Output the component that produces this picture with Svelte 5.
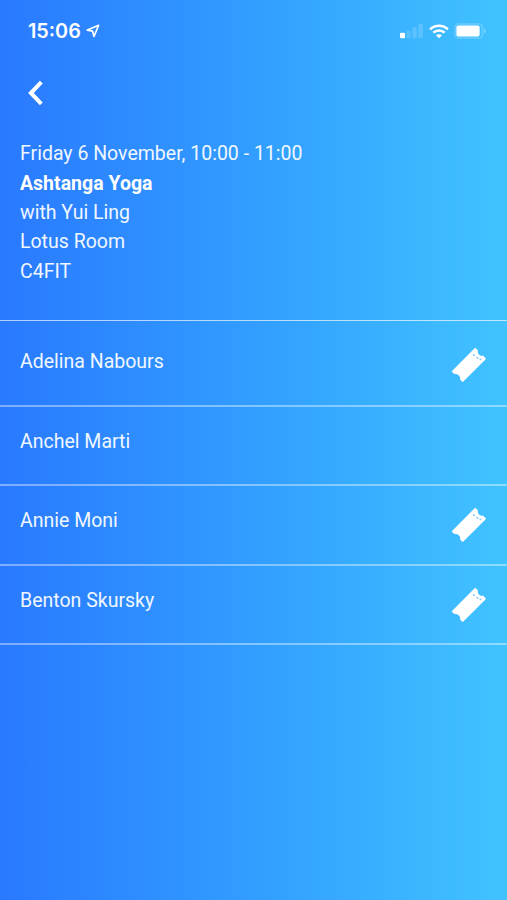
<script>
  const session = {
    when: 'Friday 6 November, 10:00 - 11:00',
    title: 'Ashtanga Yoga',
    teacher: 'with Yui Ling',
    room: 'Lotus Room',
    venue: 'C4FIT',
  }

  const attendees = [
    { name: 'Adelina Nabours', ticket: true },
    { name: 'Anchel Marti', ticket: false },
    { name: 'Annie Moni', ticket: true },
    { name: 'Benton Skursky', ticket: true },
  ]
</script>

<main class="screen">
  <div class="status-bar">
    <div class="clock">
      <span>15:06</span>
      <svg class="location" width="14" height="14" viewBox="0 0 14 14">
        <path d="M12.6 1.3 1.3 6.1 6.6 7.2 8 12.5Z" fill="none" stroke="#fff" stroke-width="1.7" stroke-linejoin="round" />
      </svg>
    </div>
    <div class="indicators">
      <svg width="23" height="16" viewBox="0 0 23 16" fill="#fff">
        <rect x="0" y="9.7" width="5" height="5.6" rx="1.3" />
        <rect x="6.2" y="7.2" width="4.4" height="8" rx="1.2" opacity="0.15" />
        <rect x="12.4" y="4" width="4.4" height="11.2" rx="1.2" opacity="0.17" />
        <rect x="18.4" y="1" width="4.4" height="14.2" rx="1.2" opacity="0.17" />
      </svg>
      <svg class="wifi" width="20" height="15" viewBox="0 0 20 15" fill="none" stroke="#fff" stroke-width="2.5">
        <path d="M1.1 5.3C6.1.4 13.9.4 18.9 5.3" />
        <path d="M4.3 8.7c3.2-3.1 8.2-3.1 11.4 0" />
        <path d="M10 14.3 7 11.3c1.7-1.5 4.3-1.5 6 0Z" fill="#fff" stroke="none" />
      </svg>
      <svg class="battery" width="33" height="16" viewBox="0 0 33 16" fill="#fff">
        <rect x="1" y="1" width="27.5" height="14" rx="3.6" fill="none" stroke="#fff" stroke-width="1.8" opacity="0.18" />
        <rect x="2.4" y="2.5" width="23.2" height="11" rx="1.8" />
        <path d="M30 5.5c2.4.8 2.4 4.2 0 5Z" opacity="0.3" />
      </svg>
    </div>
  </div>

  <button class="back" aria-label="Back">
    <svg width="18" height="26" viewBox="0 0 18 26">
      <path d="M14.3 2.2 3.9 13 14.3 23.8" fill="none" stroke="#fff" stroke-width="4" />
    </svg>
  </button>

  <header class="session">
    <div>{session.when}</div>
    <div class="title">{session.title}</div>
    <div>{session.teacher}</div>
    <div>{session.room}</div>
    <div>{session.venue}</div>
  </header>

  <ul class="attendees">
    {#each attendees as person}
      <li>
        <span>{person.name}</span>
        {#if person.ticket}
          <svg class="ticket" width="36" height="36" viewBox="0 0 36 36">
            <path
              d="M25 1.3 26.9 3.5C26.5 7.2 28.6 9.3 32.2 8.8L34.5 11Q35.1 11.7 34.5 12.4L12.3 34.5Q11.6 35.1 10.9 34.5L9.2 32.5C9.7 29.3 7 26.7 3.5 27.1L1.3 25.2Q.6 24.5 1.3 23.8L23.6 1.3Q24.3.6 25 1.3Z"
              fill="#fff"
            />
            <path d="m21.8 7.4 2.1 1.3M25.3 10.4l2.1 1.1M28.6 11.7l1.6 1.2" stroke="#7cc5fd" stroke-width="1.2" />
          </svg>
        {/if}
      </li>
    {/each}
  </ul>
</main>

<style>
  :global(body) { margin: 0; }
  .screen { height: 900px; overflow: hidden; color: #f0f7ff;
            font-family: Roboto, "Liberation Sans", sans-serif; font-size: 19.5px; line-height: 29.3px;
            background: linear-gradient(90deg, #2979ff 0%, #329fff 52%, #41c3ff 100%); }
  .status-bar { display: flex; justify-content: space-between; align-items: center;
                height: 62px; padding: 0 20px 0 28px; box-sizing: border-box; }
  .clock { display: flex; align-items: center; gap: 5px; padding-top: 1px; color: #fff;
           font-family: Inter, sans-serif; font-size: 19.8px; font-weight: 600; }
  .indicators { display: flex; align-items: center; }
  .wifi { margin-left: 6px; }
  .battery { margin-left: 5px; }
  .back { display: block; margin: 18px 0 0 27px; padding: 0; border: 0; background: none; height: 26px; }
  .back svg { display: block; }
  .session { padding: 33.4px 20px 0; height: 181px; box-sizing: border-box; }
  .title { font-weight: 700; color: #fff; }
  .attendees { list-style: none; margin: 33px 0 0; padding: 0;
               border-top: 1.5px solid rgba(255, 255, 255, 0.65); }
  li { display: flex; justify-content: space-between; align-items: flex-start;
       height: 79.4px; padding: 20px 20px 0; box-sizing: border-box;
       border-bottom: 2px solid rgba(255, 255, 255, 0.4); }
  li:first-child { height: 86px; padding-top: 26px; }
  .ticket { margin-top: 1px; }
  li:first-child .ticket { margin-top: -0.5px; }
</style>
